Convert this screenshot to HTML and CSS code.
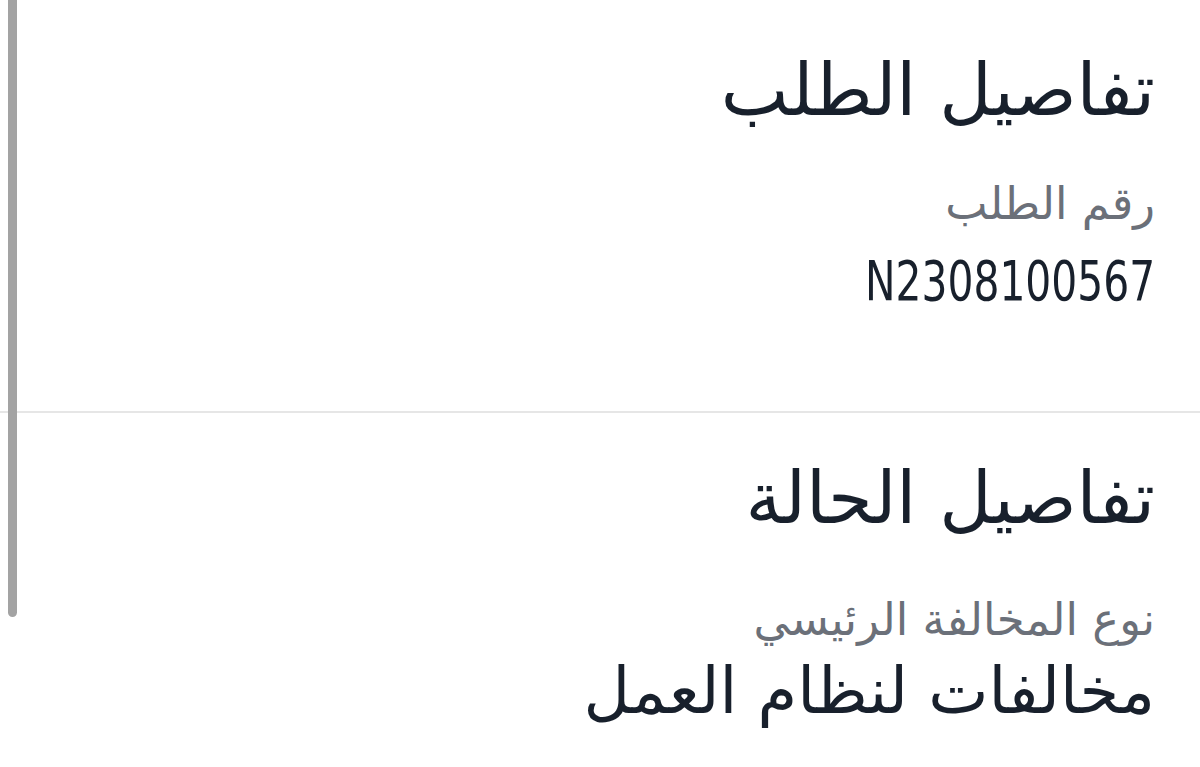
FILE: index.html
```html
<!DOCTYPE html>
<html lang="ar" dir="rtl">
<head>
  <meta charset="UTF-8">
  <meta name="viewport" content="width=device-width, initial-scale=1.0">
  <title>تفاصيل الطلب</title>
  <link rel="stylesheet" href="styles.css">
</head>
<body>
  <div class="scroll-thumb"></div>
  <div class="details">
    <section class="block block-request">
      <h2 class="block-title">تفاصيل الطلب</h2>
      <div class="field">
        <div class="field-label">رقم الطلب</div>
        <div class="field-value"><span class="number">N2308100567</span></div>
      </div>
    </section>
    <section class="block block-case">
      <h2 class="block-title">تفاصيل الحالة</h2>
      <div class="field">
        <div class="field-label">نوع المخالفة الرئيسي</div>
        <div class="field-value">مخالفات لنظام العمل</div>
      </div>
    </section>
  </div>
</body>
</html>
```

FILE: styles.css
```css
body {
  margin: 0;
  background: #fff;
  font-family: "DejaVu Sans", sans-serif;
  color: #18202c;
  height: 767px;
  overflow: hidden;
}
.details {
  display: flex;
  flex-direction: column;
}
.block {
  padding: 0 45px 0 0;
}
.block-request {
  height: 413px;
  border-bottom: 2px solid #e6e6e6;
  box-sizing: border-box;
  padding-top: 40px;
}
.block-case {
  padding-top: 35px;
}
.block-title {
  margin: 0;
  font-size: 72px;
  font-weight: normal;
  line-height: 100px;
}
.field {
  margin-top: 34px;
}
.block-case .field {
  margin-top: 42px;
}
.field-label {
  font-size: 45px;
  color: #6b7079;
  line-height: 60px;
}
.field-value {
  font-size: 64px;
  line-height: 70px;
  margin-top: 6px;
}
.block-request .field-value {
  margin-top: 9px;
}
/* الرقم بخط ضيق */
.number {
  display: inline-block;
  font-family: "DejaVu Sans Condensed", sans-serif;
  font-size: 56px;
  transform: scaleX(0.81);
  transform-origin: right center;
}
/* شريط التمرير */
.scroll-thumb {
  position: absolute;
  left: 8px;
  top: 0;
  width: 9px;
  height: 617px;
  background: #a3a3a3;
  border-radius: 0 0 5px 5px;
}
```
